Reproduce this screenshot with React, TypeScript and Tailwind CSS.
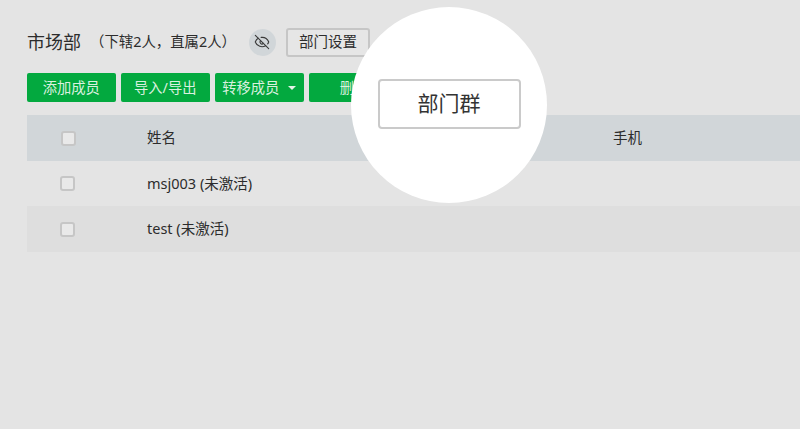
import { EyeOff } from "lucide-react";

const font = { fontFamily: '"Noto Sans", "Noto Sans CJK SC", sans-serif' };

function Check({ header }: { header?: boolean }) {
  return <span className={`block w-[15px] h-[15px] rounded-[3px] border-2 border-[#c6c6c6] bg-[#e9e9e9] ${header ? "ml-[34px]" : "ml-[33px]"}`} />;
}

function Green({ children, w }: { children: React.ReactNode; w: string }) {
  return (
    <button className={`h-[29px] rounded-[2px] bg-[#03a93f] text-[#d9f0df] text-[14.3px] flex items-center justify-center ${w}`}>
      {children}
    </button>
  );
}

export default function App() {
  return (
    <div className="relative w-[800px] h-[429px] overflow-hidden bg-[#e4e4e4] text-[#2c2c2c]" style={font}>
      <div className="pl-[27px] pt-[27px]">
        <div className="flex items-center h-[30px]">
          <span className="text-[18px] leading-none">市场部</span>
          <span className="text-[14.4px] ml-[9px] leading-none">（下辖2人，直属2人）</span>
          <span className="ml-[13px] w-[27px] h-[27px] rounded-full bg-[#d1d6d9] flex items-center justify-center">
            <EyeOff size={16} strokeWidth={1.7} className="text-[#3a3a3a]" />
          </span>
          <button className="ml-[10px] w-[84px] h-[29px] rounded-[3px] border-2 border-[#c6c6c6] bg-[#e6e6e6] text-[14.5px]">部门设置</button>
        </div>
        <div className="flex gap-[5.5px] mt-[16px]">
          <Green w="w-[88.5px]">添加成员</Green>
          <Green w="w-[88.5px]">导入/导出</Green>
          <Green w="w-[88.5px]">
            <span>转移成员</span>
            <span className="ml-[9px] w-0 h-0 border-x-[4px] border-x-transparent border-t-[4px] border-t-[#e4f4e8]" />
          </Green>
          <Green w="w-[90px]">删除</Green>
        </div>
        <div className="mt-[13px] text-[14.5px]">
          <div className="grid grid-cols-[120px_466px_1fr] items-center h-[46px] bg-[#d1d6d9]">
            <Check header />
            <span>姓名</span>
            <span>手机</span>
          </div>
          <div className="grid grid-cols-[120px_1fr] items-center h-[45px]">
            <Check />
            <span>msj003 (未激活)</span>
          </div>
          <div className="grid grid-cols-[120px_1fr] items-center h-[46px] bg-[#dedede]">
            <Check />
            <span>test (未激活)</span>
          </div>
        </div>
      </div>
      <div className="absolute left-[351px] top-[7px] w-[196px] h-[196px] rounded-full bg-white flex items-center justify-center">
        <button className="w-[143px] h-[50px] mb-[3px] rounded-[4px] border-2 border-[#cacaca] bg-white text-[21px] text-[#333]">部门群</button>
      </div>
    </div>
  );
}
